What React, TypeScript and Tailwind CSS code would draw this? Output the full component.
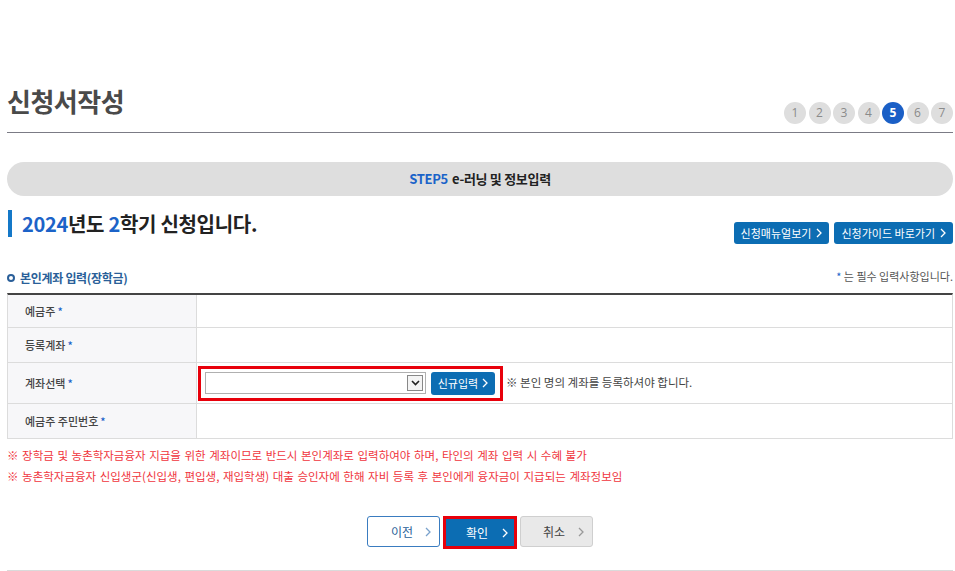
const font = { fontFamily: '"Noto Sans CJK KR", "Noto Sans", sans-serif' };

const steps = [1, 2, 3, 4, 5, 6, 7];

const rows = [
  { label: "예금주", h: "h-[33px]" },
  { label: "등록계좌", h: "h-[35px]" },
  { label: "계좌선택", h: "h-[41px]", select: true },
  { label: "예금주 주민번호", h: "h-[35px]" },
];

function Chevron({ className }: { className?: string }) {
  return (
    <svg width="6" height="10" viewBox="0 0 6 10" className={className}>
      <path d="M1 1l4 4-4 4" fill="none" stroke="currentColor" strokeWidth="1.3" />
    </svg>
  );
}

export default function App() {
  return (
    <div className="min-h-[571px] bg-white text-[#333]" style={font}>
      <div className="ml-[7px] w-[946px] pt-[84px]">
        {/* title + steps */}
        <div className="flex h-[49px] justify-between border-b border-[#7b7b85]">
          <h1 className="text-[26px] font-bold leading-[34px] tracking-[-0.5px] text-[#4a4a4a]">신청서작성</h1>
          <div className="flex gap-[2.5px] pt-[18px]">
            {steps.map((n) => (
              <span
                key={n}
                className={`flex h-[22px] w-[22px] items-center justify-center rounded-full text-[12px] ${
                  n === 5 ? "bg-[#1a5fc6] font-bold text-white" : "bg-[#dedede] text-[#8a8a8a]"
                }`}
                style={{ fontFamily: '"Open Sans", sans-serif' }}
              >
                {n}
              </span>
            ))}
          </div>
        </div>

        {/* banner */}
        <div className="mt-[29px] flex h-[34px] items-center justify-center rounded-full bg-[#dedede] text-[13px] font-bold tracking-[-0.3px]">
          <span className="text-[#1a63c9]">STEP5</span>
          <span className="ml-[4px] text-[#222]">e-러닝 및 정보입력</span>
        </div>

        {/* heading */}
        <div className="mt-[14px] flex items-end justify-between">
          <div className="mb-[7px] flex h-[27px] items-center">
            <span className="ml-[1px] h-[27px] w-[4px] bg-[#1478c8]" />
            <h2 className="ml-[10px] text-[20px] font-bold tracking-[-0.3px] text-[#222]">
              <span className="text-[#1c63c8]">2024</span>년도 <span className="text-[#1c63c8]">2</span>학기 신청입니다.
            </h2>
          </div>
          <div className="flex gap-[5px]">
            <button className="flex h-[22px] items-center gap-[5px] rounded-[3px] bg-[#0c6db3] px-[7px] text-[11px] text-white">
              신청매뉴얼보기 <Chevron />
            </button>
            <button className="flex h-[22px] items-center gap-[5px] rounded-[3px] bg-[#0c6db3] px-[7px] text-[11px] text-white">
              신청가이드 바로가기 <Chevron />
            </button>
          </div>
        </div>

        {/* section header */}
        <div className="mt-[25px] flex items-center justify-between">
          <div className="flex items-center text-[12px] font-bold tracking-[-0.3px] text-[#2a5f99]">
            <span className="mr-[5px] h-[8px] w-[8px] rounded-full border-2 border-[#2a5f99]" />
            본인계좌 입력(장학금)
          </div>
          <div className="-mt-[4px] text-[11px] text-[#555]">
            <span className="text-[#1a63c9]">*</span> 는 필수 입력사항입니다.
          </div>
        </div>

        {/* table */}
        <div className="mt-[6px] border-x border-t-2 border-x-[#dcdcdc] border-t-[#444]">
          {rows.map((r) => (
            <div key={r.label} className={`flex ${r.h} border-b border-[#dcdcdc]`}>
              <div className="flex w-[189px] items-center border-r border-[#dcdcdc] bg-[#f7f7f9] pl-[17px] text-[11px] font-medium text-[#444]">
                {r.label}
                <span className="ml-[2px] text-[#1a63c9]">*</span>
              </div>
              {r.select ? (
                <div className="flex items-center">
                  <div className="ml-[1px] flex h-[35px] w-[305px] items-center gap-[5px] border-[3px] border-[#e8000b] pl-[4px]">
                    <div className="flex h-[22px] w-[221px] items-center justify-end border border-[#b0b0b0] bg-white pr-[2px]">
                      <span className="flex h-[16px] w-[16px] items-center justify-center border border-[#888] bg-[#f4f4f4]">
                        <svg width="9" height="6" viewBox="0 0 9 6">
                          <path d="M1 1l3.5 3.5L8 1" fill="none" stroke="#222" strokeWidth="1.6" />
                        </svg>
                      </span>
                    </div>
                    <button className="flex h-[23px] w-[64px] items-center justify-center gap-[4px] rounded-[3px] bg-[#0c6db3] text-[11px] text-white">
                      신규입력 <Chevron />
                    </button>
                  </div>
                  <span className="ml-[3px] text-[11.5px] text-[#444]">※ 본인 명의 계좌를 등록하셔야 합니다.</span>
                </div>
              ) : (
                <div className="flex-1" />
              )}
            </div>
          ))}
        </div>

        {/* notes */}
        <div className="mt-[8px] flex flex-col gap-[4px] text-[11.5px] leading-[17px] text-[#f0353d] [word-spacing:1px]">
          <p>※ 장학금 및 농촌학자금융자 지급을 위한 계좌이므로 반드시 본인계좌로 입력하여야 하며, 타인의 계좌 입력 시 수혜 불가</p>
          <p>※ 농촌학자금융자 신입생군(신입생, 편입생, 재입학생) 대출 승인자에 한해 자비 등록 후 본인에게 융자금이 지급되는 계좌정보임</p>
        </div>

        {/* bottom buttons */}
        <div className="mt-[31px] flex justify-center gap-[3px] pb-[21px]">
          <button className="flex h-[31px] w-[73px] items-center justify-between rounded-[3px] border border-[#3a7cc0] bg-white pl-[23px] pr-[8px] text-[12px] text-[#2a5f99]">
            이전 <Chevron className="text-[#7aa2cc]" />
          </button>
          <div className="border-[3px] border-[#e8000b]">
            <button className="flex h-[27px] w-[68px] items-center justify-between bg-[#0c6db3] pl-[20px] pr-[6px] text-[12px] text-white">
              확인 <Chevron />
            </button>
          </div>
          <button className="flex h-[31px] w-[73px] items-center justify-between rounded-[3px] border border-[#cfcfcf] bg-[#e9e9e9] pl-[22px] pr-[8px] text-[12px] text-[#444]">
            취소 <Chevron className="text-[#999]" />
          </button>
        </div>
        <div className="border-b border-[#dadada]" />
      </div>
    </div>
  );
}
